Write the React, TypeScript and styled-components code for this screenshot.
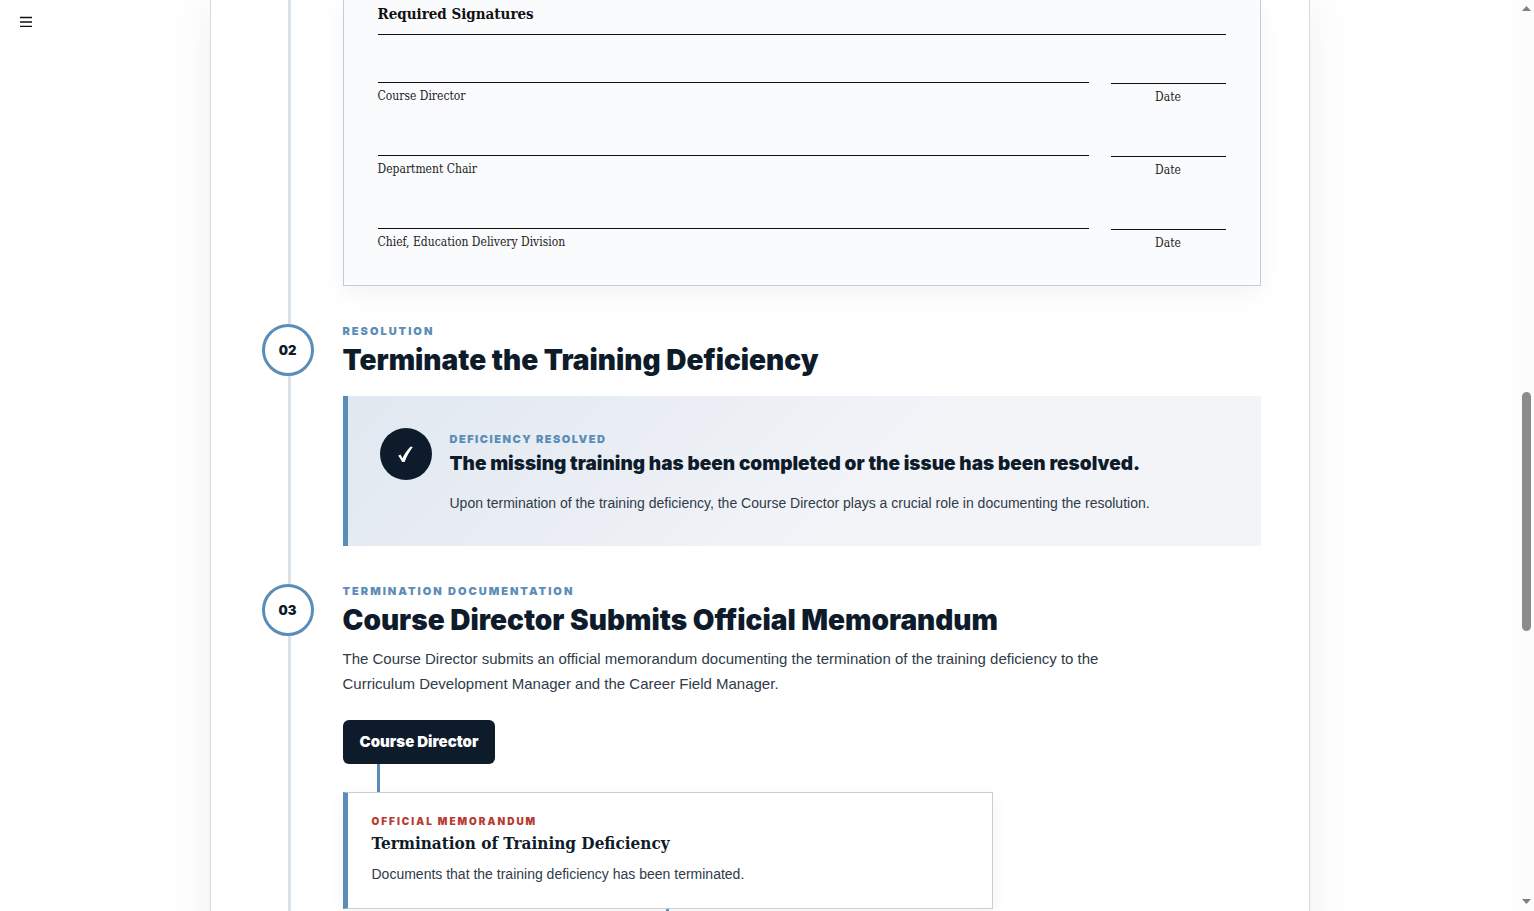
import React from "react";
import styled, { createGlobalStyle } from "styled-components";

const navy = "#0d1b2a";
const blue = "#5b8db8";
const display = `Inter, "Liberation Sans", sans-serif`;
const serif = `"DejaVu Serif Condensed", "DejaVu Serif", serif`;

const GlobalStyle = createGlobalStyle`
  *, *::before, *::after { box-sizing: border-box; }
  body {
    margin: 0;
    background: #fefefe;
    color: ${navy};
    font-family: "Liberation Sans", Arial, sans-serif;
    overflow: hidden;
  }
  h2, h3, p { margin: 0; }
`;

const Shell = styled.div`
  display: flex;
  height: 100vh;
  overflow: hidden;
`;

const MenuButton = styled.button`
  position: fixed;
  top: 8px;
  left: 12px;
  display: grid;
  place-items: center;
  width: 28px;
  height: 28px;
  padding: 0;
  border: 0;
  background: transparent;
`;

const Main = styled.main`
  flex: 1;
  min-width: 0;
`;

const Paper = styled.div`
  max-width: 1100px;
  min-height: 100%;
  margin: 0 auto;
  padding: 0 48px 0 51px;
  background: #fff linear-gradient(#d9e0e8, #d9e0e8) no-repeat 77px 0 / 3px 100%;
  border: solid #d3dade;
  border-width: 0 1px;
  box-shadow: 0 0 40px rgba(13, 43, 42, 0.05);
`;

const Step = styled.section`
  display: grid;
  grid-template-columns: 52px minmax(0, 1fr);
  column-gap: 29px;
  align-items: start;
  padding-bottom: 38px;
`;

const StepBody = styled.div`
  grid-column: 2;
`;

const StepNumber = styled.div`
  display: grid;
  place-items: center;
  width: 52px;
  height: 52px;
  border: 3px solid ${blue};
  border-radius: 50%;
  background: #fff;
  font: 900 13px/16px ${display};
`;

const Eyebrow = styled.p<{ $tight?: boolean }>`
  color: ${blue};
  font: 900 11px/14px ${display};
  letter-spacing: ${({ $tight }) => ($tight ? "1.5px" : "2px")};
  text-transform: uppercase;
`;

const MemoLabel = styled(Eyebrow)`
  color: #b83a32;
  font-size: 10px;
`;

const StepTitle = styled.h2`
  margin-top: 6px;
  font: 900 28px/32px ${display};
`;

const StepText = styled.p`
  max-width: 800px;
  margin-top: 10px;
  color: #2f3b48;
  font-size: 15px;
  line-height: 25px;
`;

const FormCard = styled.div`
  padding: 0 34px 30px;
  background: #fafbfd;
  border: 1px solid #c5ccd2;
  border-top: 0;
  box-shadow: 0 8px 24px rgba(0, 0, 0, 0.05);
`;

const FormTitle = styled.h3`
  padding: 4px 0 10px;
  border-bottom: 1px solid #111;
  color: #111;
  font: 700 15px/20px ${serif};
`;

const SignatureRow = styled.div`
  display: grid;
  grid-template-columns: minmax(0, 1fr) 115px;
  column-gap: 22px;
  height: 73px;
  padding-top: 47px;

  &:last-child { height: 74px; }
`;

const SignatureLine = styled.div<{ $date?: boolean }>`
  margin-top: ${({ $date }) => ($date ? 1 : 0)}px;
  padding-top: 4px;
  border-top: 1px solid #111;
  color: #222;
  font: 12px/18px ${serif};
  text-align: ${({ $date }) => ($date ? "center" : "left")};
`;

const Notice = styled.div`
  display: flex;
  gap: 18px;
  margin-top: 20px;
  padding: 32px 32px 31px;
  border-left: 5px solid ${blue};
  background: linear-gradient(135deg, #e1e8f0 0%, #f2f4f8 60%);
`;

const CheckBadge = styled.div`
  display: grid;
  place-items: center;
  flex: none;
  width: 52px;
  height: 52px;
  border-radius: 50%;
  background: ${navy};
`;

const NoticeBody = styled.div`
  padding-top: 4px;
`;

const NoticeTitle = styled.h3`
  margin-top: 5px;
  font: 900 19px/26px ${display};
`;

const NoticeText = styled.p`
  margin-top: 15px;
  color: #2f3b48;
  font-size: 14px;
  line-height: 23px;
`;

const Flow = styled.div`
  max-width: 650px;
  margin-top: 24px;
`;

const Role = styled.div`
  width: fit-content;
  padding: 12px 17px;
  border-radius: 6px;
  background: ${navy};
  color: #fff;
  font: 900 15px/20px ${display};
`;

const Connector = styled.div<{ $center?: boolean }>`
  width: 3px;
  height: 28px;
  margin: ${({ $center }) => ($center ? "0 auto" : "0 0 0 34px")};
  background: ${blue};
`;

const Memo = styled.article`
  padding: 21px 24px 22px;
  border: 1px solid #c8ced6;
  border-left: 5px solid ${blue};
  background: #fff;
  box-shadow: 0 4px 16px rgba(13, 27, 42, 0.05);
`;

const MemoTitle = styled.h3`
  margin-top: 3px;
  font: 700 17px/24px ${serif};
`;

const MemoText = styled.p`
  margin-top: 8px;
  color: #2f3b48;
  font-size: 14px;
  line-height: 23px;
`;

const ScrollRail = styled.div`
  display: flex;
  flex-direction: column;
  align-items: center;
  flex: none;
  width: 15px;
  padding: 6px 0 7px;
  background: #fcfcfc;
`;

const RailSpace = styled.div<{ $grow: number }>`
  flex: ${({ $grow }) => $grow} 0 0;
`;

const RailThumb = styled.div`
  flex: 239 0 0;
  width: 9px;
  border-radius: 5px;
  background: #8b8b8b;
`;

const signers = ["Course Director", "Department Chair", "Chief, Education Delivery Division"];

export default function App() {
  return (
    <Shell>
      <GlobalStyle />
      <MenuButton aria-label="Open menu">
        <svg width="12" height="12" viewBox="0 0 12 12" stroke="#111" strokeWidth="1.3">
          <path d="M0 1.5H12M0 6H12M0 10.3H12" />
        </svg>
      </MenuButton>
      <Main>
        <Paper>
          <Step>
            <StepBody>
              <FormCard>
                <FormTitle>Required Signatures</FormTitle>
                <div>
                  {signers.map((name) => (
                    <SignatureRow key={name}>
                      <SignatureLine>{name}</SignatureLine>
                      <SignatureLine $date>Date</SignatureLine>
                    </SignatureRow>
                  ))}
                </div>
              </FormCard>
            </StepBody>
          </Step>

          <Step>
            <StepNumber>02</StepNumber>
            <StepBody>
              <Eyebrow>Resolution</Eyebrow>
              <StepTitle>Terminate the Training Deficiency</StepTitle>
              <Notice>
                <CheckBadge>
                  <svg width="20" height="20" viewBox="0 0 20 20" fill="#fff">
                    <path d="M2.2 11.8 4.3 10.6 C5.2 11.6 5.8 12.8 6.4 14.2 C8.6 9.6 11.2 5.8 14.6 2.4 L16.8 3 C13.4 7.4 10.8 12.2 8.6 18 L6 18 C5 15.6 3.8 13.6 2.2 11.8Z" />
                  </svg>
                </CheckBadge>
                <NoticeBody>
                  <Eyebrow $tight>Deficiency Resolved</Eyebrow>
                  <NoticeTitle>The missing training has been completed or the issue has been resolved.</NoticeTitle>
                  <NoticeText>
                    Upon termination of the training deficiency, the Course Director plays a crucial role in documenting the resolution.
                  </NoticeText>
                </NoticeBody>
              </Notice>
            </StepBody>
          </Step>

          <Step>
            <StepNumber>03</StepNumber>
            <StepBody>
              <Eyebrow>Termination Documentation</Eyebrow>
              <StepTitle>Course Director Submits Official Memorandum</StepTitle>
              <StepText>
                The Course Director submits an official memorandum documenting the termination of the training deficiency to the
                Curriculum Development Manager and the Career Field Manager.
              </StepText>
              <Flow>
                <Role>Course Director</Role>
                <Connector />
                <Memo>
                  <MemoLabel>Official Memorandum</MemoLabel>
                  <MemoTitle>Termination of Training Deficiency</MemoTitle>
                  <MemoText>Documents that the training deficiency has been terminated.</MemoText>
                </Memo>
                <Connector $center />
              </Flow>
            </StepBody>
          </Step>
        </Paper>
      </Main>
      <ScrollRail aria-hidden="true">
        <svg width="9" height="5" viewBox="0 0 9 5" fill="#808080"><path d="M4.5 0 9 5H0Z" /></svg>
        <RailSpace $grow={381} />
        <RailThumb />
        <RailSpace $grow={268} />
        <svg width="9" height="5" viewBox="0 0 9 5" fill="#808080"><path d="M0 0H9L4.5 5Z" /></svg>
      </ScrollRail>
    </Shell>
  );
}
